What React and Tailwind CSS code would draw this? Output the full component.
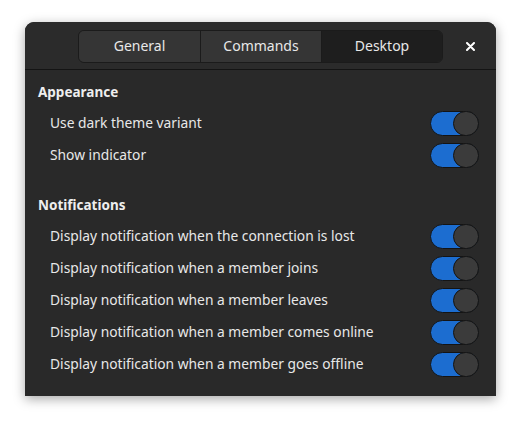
import React, { useState } from "react";

const FONT = { fontFamily: '"Noto Sans", "Open Sans", sans-serif' };

function Toggle({ on, onChange }) {
  return (
    <button
      onClick={onChange}
      className={`relative w-[49px] h-[25px] rounded-full border border-[#141414] ${on ? "bg-[#1c6dd0]" : "bg-[#3a3a3a]"}`}
    >
      <span
        className={`absolute top-[-1px] w-[26px] h-[25px] rounded-full bg-[#3b3b3b] border border-[#141414] ${on ? "right-[-1px]" : "left-[-1px]"}`}
      />
    </button>
  );
}

function Row({ label }) {
  const [on, setOn] = useState(true);
  return (
    <div className="flex items-center justify-between h-8 pl-[12px]">
      <span className="text-[13.8px] text-[#e8e8e8]">{label}</span>
      <Toggle on={on} onChange={() => setOn(!on)} />
    </div>
  );
}

export default function App() {
  const [tab, setTab] = useState("Desktop");
  const tabs = ["General", "Commands", "Desktop"];

  return (
    <div className="w-[521px] h-[424px] bg-white pt-[22px] pl-[25px]" style={FONT}>
      <div className="w-[471px] h-[374px] bg-[#292929] rounded-t-[9px] shadow-[0_3px_12px_rgba(0,0,0,0.35)] flex flex-col overflow-hidden">
        {/* header bar */}
        <div className="relative h-[48px] bg-[#2b2b2b] border-b border-[#141414] flex items-center justify-center">
          <div className="flex h-[33px] mt-[1px] rounded-[6px] border border-[#1b1b1b] overflow-hidden">
            {tabs.map((t, i) => (
              <button
                key={t}
                onClick={() => setTab(t)}
                className={`w-[121px] pb-[2px] text-[14px] text-[#e8e8e8] ${i > 0 ? "border-l border-[#1b1b1b]" : ""} ${tab === t ? "bg-[#1e1e1e]" : "bg-[#353535]"}`}
              >
                {t}
              </button>
            ))}
          </div>
          <button className="absolute right-[21px] top-[20px] text-white">
            <svg width="9" height="9" viewBox="0 0 9 9">
              <path d="M1 1L8 8M8 1L1 8" stroke="currentColor" strokeWidth="2" strokeLinecap="round" />
            </svg>
          </button>
        </div>

        {/* body */}
        <div className="flex flex-col pt-[5px] pl-[13px] pr-[17px]">
          <div className="h-8 pt-[2px] flex items-center text-[13.5px] font-bold text-[#eeeeee]">Appearance</div>
          <Row label="Use dark theme variant" />
          <Row label="Show indicator" />

          <div className="h-8 pt-[2px] mt-[17px] flex items-center text-[13.5px] font-bold text-[#eeeeee]">Notifications</div>
          <Row label="Display notification when the connection is lost" />
          <Row label="Display notification when a member joins" />
          <Row label="Display notification when a member leaves" />
          <Row label="Display notification when a member comes online" />
          <Row label="Display notification when a member goes offline" />
        </div>
      </div>
    </div>
  );
}
